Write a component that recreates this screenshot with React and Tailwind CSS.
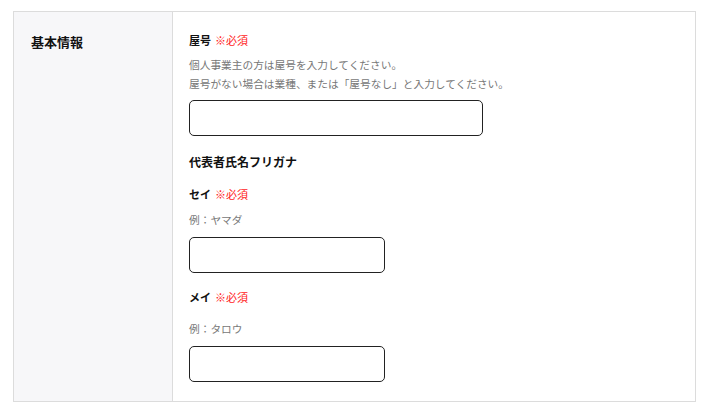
export default function App() {
  const font = { fontFamily: '"Noto Sans CJK JP", "Noto Sans", sans-serif' }

  const Req = () => <span className="ml-[4px] font-normal text-[#ff1a1a]">※必須</span>

  return (
    <div className="w-[706px] h-[407px] bg-white pt-[11px] pl-[13px]" style={font}>
      <div className="flex w-[683px] border border-[#dcdcdc]">
        <div className="w-[159px] shrink-0 bg-[#f7f7f9] border-r border-[#dcdcdc] pl-[17px] pt-[20px]">
          <h2 className="text-[13px] leading-[20px] font-bold text-[#111]">基本情報</h2>
        </div>
        <div className="flex-1 pl-[16px] pt-[20px] pb-[19px]">
          <div className="text-[11px] leading-[16px] font-bold text-[#111]">
            屋号<Req />
          </div>
          <p className="mt-[7px] text-[10.7px] leading-[19px] text-[#777]">
            個人事業主の方は屋号を入力してください。
            <br />
            屋号がない場合は業種、または「屋号なし」と入力してください。
          </p>
          <input type="text" className="mt-[7px] block w-[294px] h-[36px] rounded-[5px] border border-[#222] bg-white" />

          <h3 className="mt-[17px] text-[12px] leading-[18px] font-bold text-[#111]">代表者氏名フリガナ</h3>

          <div className="mt-[15px] text-[11px] leading-[16px] font-bold text-[#111]">
            セイ<Req />
          </div>
          <p className="mt-[8px] text-[10.7px] leading-[19px] text-[#777]">例：ヤマダ</p>
          <input type="text" className="mt-[8px] block w-[196px] h-[36px] rounded-[5px] border border-[#222] bg-white" />

          <div className="mt-[16px] text-[11px] leading-[16px] font-bold text-[#111]">
            メイ<Req />
          </div>
          <p className="mt-[14px] text-[10.7px] leading-[19px] text-[#777]">例：タロウ</p>
          <input type="text" className="mt-[8px] block w-[196px] h-[36px] rounded-[5px] border border-[#222] bg-white" />
        </div>
      </div>
    </div>
  )
}
